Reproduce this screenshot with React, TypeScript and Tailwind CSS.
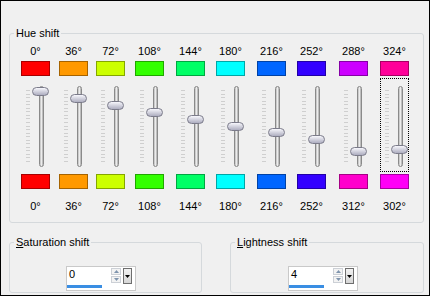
const hues = [
  { top: 0, bottom: 0 },
  { top: 36, bottom: 36 },
  { top: 72, bottom: 72 },
  { top: 108, bottom: 108 },
  { top: 144, bottom: 144 },
  { top: 180, bottom: 180 },
  { top: 216, bottom: 216 },
  { top: 252, bottom: 252 },
  { top: 288, bottom: 312 },
  { top: 324, bottom: 302 },
];

const Swatch = ({ hue }: { hue: number }) => (
  <div
    className="h-[15px] w-[29px] border border-black/35"
    style={{ backgroundColor: `hsl(${hue} 100% 50%)` }}
  />
);

const Slider = ({ value, focused }: { value: number; focused?: boolean }) => {
  const thumbTop = 9 + (value / 360) * 69;
  return (
    <div
      className={`relative flex h-[94px] w-[29px] items-start border ${
        focused ? "border-dotted border-black" : "border-transparent"
      }`}
    >
      <svg width="4" height="72" className="ml-[4px] mt-[11px]">
        {Array.from({ length: 21 }, (_, i) => {
          const y = Math.round(i * 3.55) + 0.5;
          return <line key={i} x1="0" x2="4" y1={y} y2={y} stroke="#cfcfcf" />;
        })}
      </svg>
      <div className="ml-[9px] mt-[7px] h-[81px] w-[5px] rounded-full border border-[#8a8a8a] bg-linear-to-r from-[#bdbdbd] via-[#ececec] to-[#a9a9a9]" />
      <div
        className="absolute left-[10px] h-[9px] w-[17px] rounded-full border border-[#7b7b8a] bg-linear-to-b from-[#f7f7fc] to-[#aeaec0]"
        style={{ top: thumbTop - 1 }}
      />
    </div>
  );
};

const SpinBox = ({ value }: { value: string }) => (
  <div className="flex h-[25px] w-[70px] flex-col border border-[#c9c9c9] bg-white">
    <div className="flex h-[18px] items-start">
      <span className="w-[44px] pl-[2px] pt-[1px] leading-[13px]">{value}</span>
      <div className="mt-[1px] flex w-[10px] flex-col gap-[1px]">
        <div className="flex h-[7px] items-center justify-center border border-[#ccd0d6] bg-[#f3f3f3]">
          <svg width="5" height="3">
            <path d="M0 3 L2.5 0 L5 3 Z" fill="#7e94ad" />
          </svg>
        </div>
        <div className="flex h-[7px] items-center justify-center border border-[#ccd0d6] bg-[#f3f3f3]">
          <svg width="5" height="3">
            <path d="M0 0 L5 0 L2.5 3 Z" fill="#7e94ad" />
          </svg>
        </div>
      </div>
      <div className="ml-[2px] mt-[1px] flex h-[16px] w-[9px] items-center justify-center border border-[#6e6e6e] bg-linear-to-b from-[#f2f2f2] to-[#d6d6d6]">
        <svg width="5" height="3">
          <path d="M0 0 L5 0 L2.5 3 Z" fill="#000" />
        </svg>
      </div>
    </div>
    <div className="h-[3px] w-[35px] bg-[#3a8ee3]" />
  </div>
);

export default function App() {
  return (
    <div className="h-[296px] w-[430px] overflow-hidden border border-black bg-[#f0f0f0] font-['Liberation_Sans',Arial,sans-serif] text-[11px] leading-[13px] text-black">
      <fieldset className="ml-[8px] mt-[26px] w-[415px] rounded-[3px] border border-[#d5d9dc] pb-[9px]">
        <legend className="ml-[4px] px-[2px] leading-[13px]">Hue shift</legend>
        <div className="grid grid-cols-[38px_37px_39px_41px_40px_41px_40px_42px_41px_29px] pl-[11px] pt-[5px]">
          {hues.map((h, i) => (
            <div key={i} className="flex w-[29px] flex-col">
              <span className="text-center">{h.top}°</span>
              <div className="mt-[3px]">
                <Swatch hue={h.top} />
              </div>
              <div className="mt-[2px]">
                <Slider value={h.bottom} focused={i === 9} />
              </div>
              <div className="mt-[2px]">
                <Swatch hue={h.bottom} />
              </div>
              <span className="mt-[11px] text-center">{h.bottom}°</span>
            </div>
          ))}
        </div>
      </fieldset>

      <div className="ml-[8px] mt-[13px] flex gap-[28px]">
        <fieldset className="h-[57px] w-[193px] rounded-[3px] border border-[#d5d9dc]">
          <legend className="ml-[4px] px-[2px] leading-[13px]">
            <span className="underline">S</span>aturation shift
          </legend>
          <div className="ml-[56px] mt-[17px]">
            <SpinBox value="0" />
          </div>
        </fieldset>
        <fieldset className="h-[57px] w-[194px] rounded-[3px] border border-[#d5d9dc]">
          <legend className="ml-[4px] px-[2px] leading-[13px]">
            <span className="underline">L</span>ightness shift
          </legend>
          <div className="ml-[57px] mt-[17px]">
            <SpinBox value="4" />
          </div>
        </fieldset>
      </div>
    </div>
  );
}
